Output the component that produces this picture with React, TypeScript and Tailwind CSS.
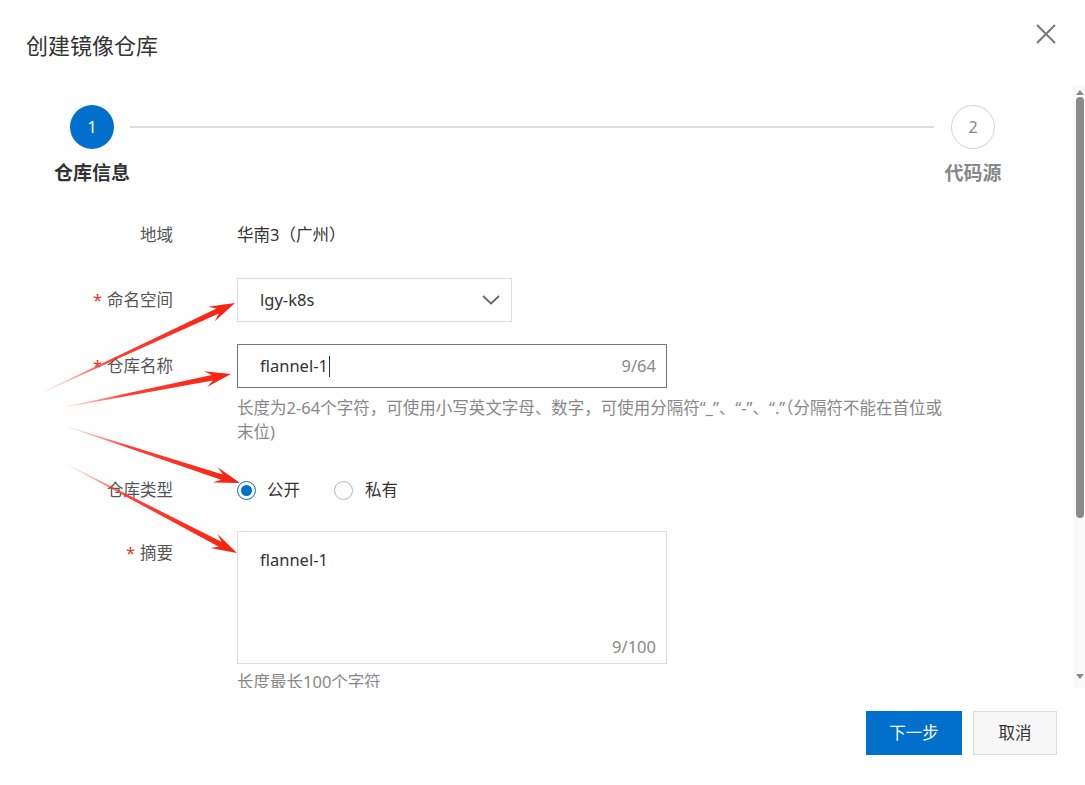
import React from "react";

const font = { fontFamily: '"Noto Sans", "Noto Sans CJK SC", sans-serif' };

const arrows: [number, number, number, number][] = [
  [43, 392, 235, 303],
  [65, 407, 231, 374],
  [68, 427, 240, 483],
  [68, 465, 237, 553],
];

function arrowPoints(sx: number, sy: number, tx: number, ty: number) {
  const dx = tx - sx;
  const dy = ty - sy;
  const len = Math.hypot(dx, dy);
  const ux = dx / len;
  const uy = dy / len;
  const nx = -uy;
  const ny = ux;
  const L = 26;
  const W = 8;
  const w = 2.8;
  const notch = 19;
  const bx = tx - ux * notch;
  const by = ty - uy * notch;
  const hx = tx - ux * L;
  const hy = ty - uy * L;
  const pts = [
    [sx + nx * 0.3, sy + ny * 0.3],
    [bx + nx * w, by + ny * w],
    [hx + nx * W, hy + ny * W],
    [tx, ty],
    [hx - nx * W, hy - ny * W],
    [bx - nx * w, by - ny * w],
    [sx - nx * 0.3, sy - ny * 0.3],
  ];
  return pts.map((p) => p[0].toFixed(1) + "," + p[1].toFixed(1)).join(" ");
}

function Label({ children, required }: { children: React.ReactNode; required?: boolean }) {
  return (
    <div className="w-[173px] shrink-0 text-right text-[16.5px] leading-[24px] text-[#555]">
      {required && <span className="mr-[5px] text-[#e0362c]">*</span>}
      {children}
    </div>
  );
}

export default function App() {
  return (
    <div className="relative flex h-[785px] w-[1085px] flex-col overflow-hidden bg-white" style={font}>
      {/* header */}
      <div className="flex h-[85px] shrink-0 items-start justify-between">
        <div className="pl-[26px] pt-[30px] text-[22px] leading-[30px] text-[#333]">创建镜像仓库</div>
        <svg className="mr-[29px] mt-[24px]" width="20" height="20" viewBox="0 0 20 20">
          <path d="M1 1 L19 19 M19 1 L1 19" stroke="#777" strokeWidth="2" fill="none" />
        </svg>
      </div>

      {/* scroll area */}
      <div className="flex h-[603px] shrink-0 overflow-hidden">
        <div className="flex-1 overflow-hidden pt-[20px]">
          {/* steps */}
          <div className="flex items-start pl-[70px] pr-[78px]">
            <div className="flex w-[44px] flex-col items-center">
              <div className="flex h-[44px] w-[44px] items-center justify-center rounded-full bg-[#0070cc] text-[16px] text-white">
                1
              </div>
              <div className="mt-[12px] whitespace-nowrap text-[19px] font-bold leading-[24px] text-[#333]">仓库信息</div>
            </div>
            <div className="ml-[16px] mr-[17px] mt-[21px] h-[2px] flex-1 bg-[#dedede]" />
            <div className="flex w-[44px] flex-col items-center">
              <div className="flex h-[44px] w-[44px] items-center justify-center rounded-full border border-[#d4d4d4] text-[16px] text-[#888]">
                2
              </div>
              <div className="mt-[12px] whitespace-nowrap text-[19px] font-bold leading-[24px] text-[#888]">代码源</div>
            </div>
          </div>

          {/* region */}
          <div className="mt-[38px] flex">
            <Label>地域</Label>
            <div className="ml-[64px] text-[16.5px] leading-[24px] text-[#333]">华南3（广州）</div>
          </div>

          {/* namespace */}
          <div className="mt-[31px] flex items-center">
            <Label required>命名空间</Label>
            <div className="ml-[64px] flex h-[44px] w-[275px] items-center justify-between border border-[#dcdcdc] pl-[22px] pr-[11px] text-[16.5px] text-[#333]">
              <span>lgy-k8s</span>
              <svg width="18" height="10" viewBox="0 0 18 10">
                <path d="M1 1 L9 8.5 L17 1" stroke="#666" strokeWidth="1.8" fill="none" />
              </svg>
            </div>
          </div>

          {/* name */}
          <div className="mt-[22px] flex">
            <div className="flex h-[44px] items-center">
              <Label required>仓库名称</Label>
            </div>
            <div className="ml-[64px] flex flex-col">
              <div className="flex h-[44px] w-[430px] items-center justify-between border border-[#767676] pl-[22px] pr-[10px] text-[16.5px]">
                <span className="flex items-center text-[#333]">
                  flannel-1
                  <span className="ml-[1px] h-[21px] border-l border-[#333]" />
                </span>
                <span className="text-[#888]">9/64</span>
              </div>
              <div className="mt-[8px] text-[16.5px] leading-[24px] text-[#888]">
                <div className="whitespace-nowrap">长度为2-64个字符，可使用小写英文字母、数字，可使用分隔符“_”、“-”、“.”（分隔符不能在首位或</div>
                <div>末位)</div>
              </div>
            </div>
          </div>

          {/* type */}
          <div className="mt-[34px] flex items-center">
            <Label>仓库类型</Label>
            <div className="ml-[64px] flex items-center text-[16.5px] leading-[24px] text-[#333]">
              <span className="flex h-[19px] w-[19px] items-center justify-center rounded-full border border-[#0070cc]">
                <span className="h-[11px] w-[11px] rounded-full bg-[#0070cc]" />
              </span>
              <span className="ml-[11px]">公开</span>
              <span className="ml-[34px] h-[19px] w-[19px] rounded-full border border-[#b5b5b5]" />
              <span className="ml-[12px]">私有</span>
            </div>
          </div>

          {/* summary */}
          <div className="mt-[29px] flex">
            <div className="pt-[10px]">
              <Label required>摘要</Label>
            </div>
            <div className="ml-[64px] flex flex-col">
              <div className="flex h-[133px] w-[430px] flex-col justify-between border border-[#dcdcdc] pb-[4px] pl-[22px] pr-[10px] pt-[16px] text-[16.5px] leading-[24px]">
                <span className="text-[#333]">flannel-1</span>
                <span className="self-end text-[#888]">9/100</span>
              </div>
              <div className="mt-[6px] text-[16.5px] leading-[24px] text-[#888]">长度最长100个字符</div>
            </div>
          </div>
        </div>

        {/* scrollbar */}
        <div className="flex w-[12px] shrink-0 flex-col items-center bg-[#f9f9f9] pl-[2px]">
          <svg className="mt-[4px]" width="8" height="6" viewBox="0 0 8 6">
            <path d="M0 6 L4 1 L8 6 Z" fill="#8a8a8a" />
          </svg>
          <div className="mt-[2px] h-[421px] w-[8px] rounded-full bg-[#8a8a8a]" />
          <div className="flex-1" />
          <svg className="mb-[8px]" width="8" height="6" viewBox="0 0 8 6">
            <path d="M0 0 L4 5 L8 0 Z" fill="#8a8a8a" />
          </svg>
        </div>
      </div>

      {/* footer */}
      <div className="flex flex-1 items-start justify-end gap-[11px] pr-[28px] pt-[23px]">
        <button className="flex h-[44px] w-[96px] items-center justify-center bg-[#0070cc] text-[16.5px] text-white">下一步</button>
        <button className="flex h-[44px] w-[84px] items-center justify-center border border-[#dcdcdc] bg-[#f7f7f7] text-[16.5px] text-[#333]">
          取消
        </button>
      </div>

      {/* annotation arrows */}
      <svg className="pointer-events-none absolute left-0 top-0" width="1085" height="785" viewBox="0 0 1085 785">
        <defs>
          {arrows.map(([sx, sy, tx, ty], i) => (
            <linearGradient key={i} id={"ag" + i} gradientUnits="userSpaceOnUse" x1={sx} y1={sy} x2={tx} y2={ty}>
              <stop offset="0" stopColor="#ff4a3a" stopOpacity="0.1" />
              <stop offset="0.35" stopColor="#ff2a1c" stopOpacity="0.9" />
              <stop offset="1" stopColor="#f8200f" stopOpacity="1" />
            </linearGradient>
          ))}
        </defs>
        {arrows.map(([sx, sy, tx, ty], i) => (
          <polygon key={i} points={arrowPoints(sx, sy, tx, ty)} fill={"url(#ag" + i + ")"} />
        ))}
      </svg>
    </div>
  );
}
